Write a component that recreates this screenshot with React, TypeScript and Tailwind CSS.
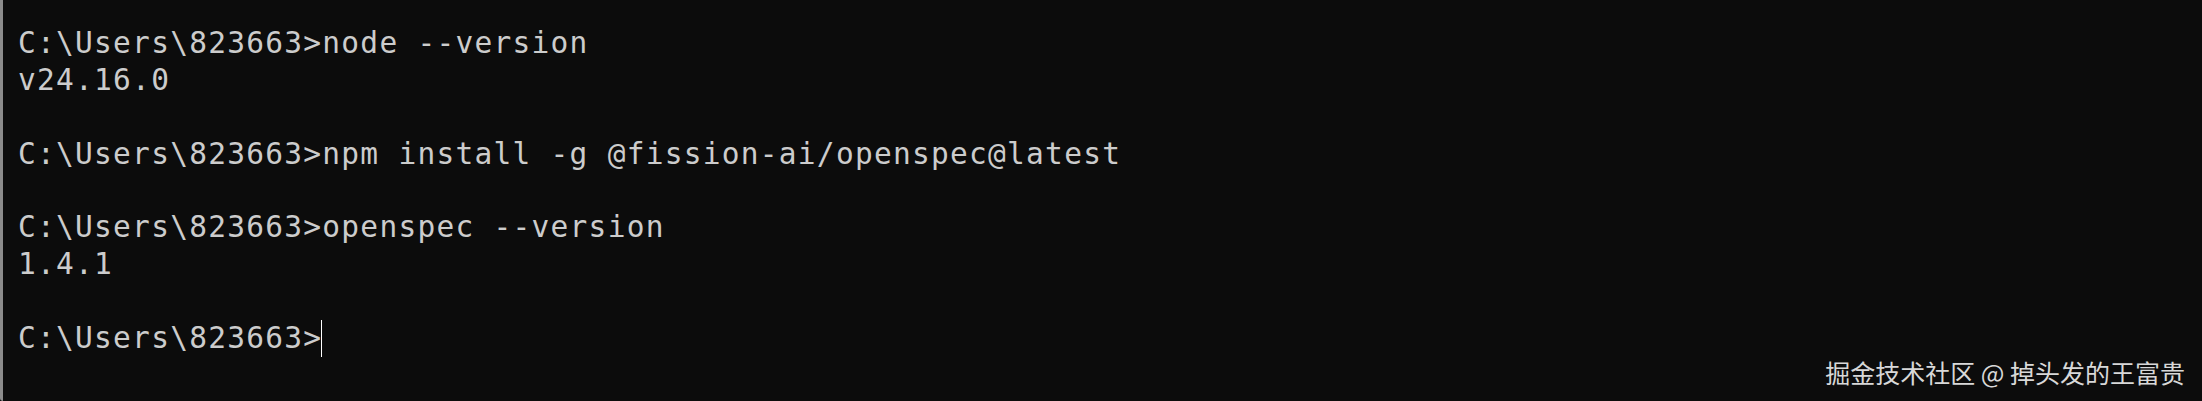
const lines: { prompt?: boolean; text: string }[] = [
  { prompt: true, text: 'node --version' },
  { text: 'v24.16.0' },
  { text: '' },
  { prompt: true, text: 'npm install -g @fission-ai/openspec@latest' },
  { text: '' },
  { prompt: true, text: 'openspec --version' },
  { text: '1.4.1' },
  { text: '' },
];

export default function App() {
  return (
    <div className="relative h-[401px] w-[2202px] overflow-hidden bg-[#0c0c0c]">
      <div className="flex h-full">
        {/* window edge */}
        <div className="w-[3px] rounded-bl-[3px] bg-[#8c8c8c]" />

        {/* terminal output */}
        <div className="flex flex-col pl-[15px] pt-[25px] font-['DejaVu_Sans_Mono',monospace] text-[29.5px] leading-[36.9px] tracking-[1.26px] text-[#cccccc] whitespace-pre">
          {lines.map((l, i) => (
            <div key={i} className="h-[36.9px]">
              {l.prompt ? 'C:\\Users\\823663>' : ''}
              {l.text}
            </div>
          ))}
          <div className="flex h-[36.9px] items-center">
            <span>C:\Users\823663&gt;</span>
            <span className="ml-[-1px] h-[37px] w-px bg-white" />
          </div>
        </div>
      </div>

      {/* watermark */}
      <div className="absolute bottom-[13px] right-[17px] font-['Noto_Sans_CJK_SC',sans-serif] text-[25px] leading-[32px] text-[#d8d8d8]">
        掘金技术社区 @ 掉头发的王富贵
      </div>
    </div>
  );
}
